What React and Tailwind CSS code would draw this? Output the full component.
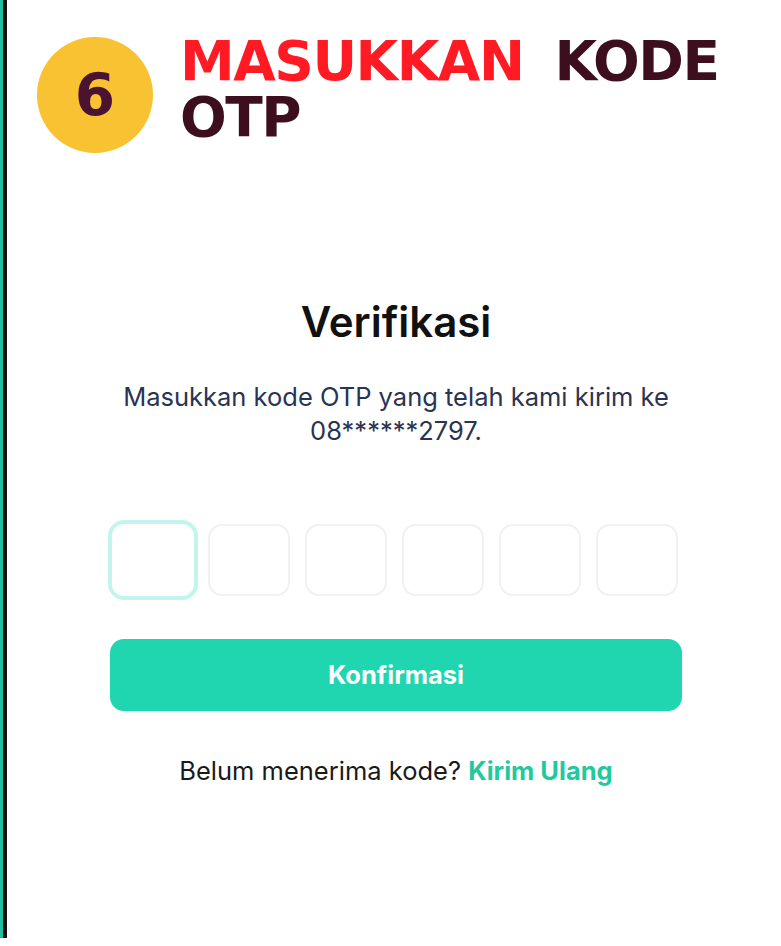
export default function App() {
  const boxes = [0, 1, 2, 3, 4, 5];
  return (
    <div className="w-[781px] h-[946px] flex bg-white overflow-hidden">
      {/* left edge strip */}
      <div className="flex h-[938px] shrink-0">
        <div className="w-[3px] bg-[#1fbf9f]" />
        <div className="w-[4px] bg-[#111111]" />
      </div>

      <div className="flex-1 flex flex-col">
        {/* header */}
        <div className="flex items-start mt-[37px] ml-[30px]">
          <div
            className="w-[116px] h-[116px] rounded-full bg-[#f9c232] flex items-center justify-center shrink-0 text-[#4a1330] text-[58px] font-bold leading-none"
            style={{ fontFamily: '"DejaVu Sans", sans-serif' }}
          >
            6
          </div>
          <div
            className="ml-[27px] mt-[-4px] text-[55px] font-bold leading-[56px] tracking-[-1.5px]"
            style={{ fontFamily: '"DejaVu Sans", sans-serif' }}
          >
            <div>
              <span className="text-[#ff1a24]">MASUKKAN</span>
              <span className="text-[#3d0f1e] ml-[31px]">KODE</span>
            </div>
            <div className="text-[#3d0f1e]">OTP</div>
          </div>
        </div>

        {/* verification card */}
        <div
          className="w-[572px] ml-[103px] mt-[148px] flex flex-col items-center"
          style={{ fontFamily: 'Inter, "Noto Sans", sans-serif' }}
        >
          <h1 className="text-[42px] font-semibold text-[#111111] leading-none">Verifikasi</h1>
          <p className="mt-[37px] text-center text-[25.5px] leading-[34px] text-[#2a3352]">
            Masukkan kode OTP yang telah kami kirim ke
            <br />
            08******2797.
          </p>

          <div className="mt-[72px] flex gap-[15px] items-center self-start -ml-[2px]">
            {boxes.map((i) =>
              i === 0 ? (
                <div
                  key={i}
                  className="w-[90px] h-[80px] -mr-[5px] rounded-[16px] border-[4px] border-[#c2f5ee] shrink-0"
                />
              ) : (
                <div
                  key={i}
                  className="w-[82px] h-[72px] rounded-[14px] border-2 border-[#f1f1f1] shrink-0"
                />
              )
            )}
          </div>

          <button className="mt-[39px] w-[572px] h-[72px] rounded-[14px] bg-[#1fd6b0] text-white text-[25.5px] font-bold">
            Konfirmasi
          </button>

          <p className="mt-[44px] text-[25.5px] leading-[32px] text-[#1a1a1a]">
            Belum menerima kode?{" "}
            <span className="font-bold text-[#22c99e]">Kirim Ulang</span>
          </p>
        </div>
      </div>
    </div>
  );
}
